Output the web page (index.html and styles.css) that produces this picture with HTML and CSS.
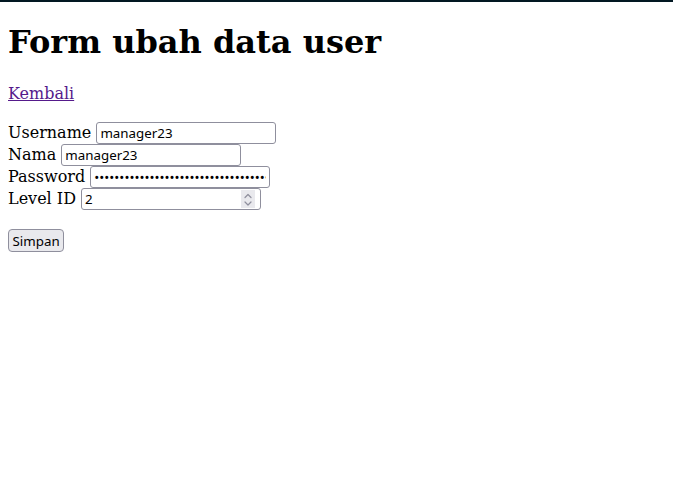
FILE: index.html
```html
<!DOCTYPE html>
<html lang="id" class="page">
<head>
<meta charset="utf-8">
<title>Form ubah data user</title>
<link rel="stylesheet" href="styles.css">
</head>
<body class="body">
<h1 class="title">Form ubah data user</h1>
<p class="back"><a href="#" class="back-link">Kembali</a></p>
<form class="form">
Username <input type="text" class="field" value="manager23"><br>
Nama <input type="text" class="field" value="manager23"><br>
Password <input type="password" class="field" value="manager23manager23manager23manager23manager23"><br>
Level ID <span class="num"><input type="number" class="num-input" value="2"><span class="spin"><svg class="spin-icon" width="14" height="18" viewBox="0 0 14 18"><path d="M4 7.5 L7 4.5 L10 7.5" fill="none" stroke="#8f8f9d" stroke-width="1.2" stroke-linecap="round" stroke-linejoin="round"/><path d="M4 12 L7 15 L10 12" fill="none" stroke="#8f8f9d" stroke-width="1.2" stroke-linecap="round" stroke-linejoin="round"/></svg></span></span><br><br>
<button type="button" class="btn">Simpan</button>
</form>
</body>
</html>
```
FILE: styles.css
```css
.page {
  border-top: 2px solid #021822;
}
.body {
  margin: 0 8px 8px;
  font-family: "DejaVu Serif", serif;
  font-size: 16px;
  color: #000;
}
.title {
  font-size: 32px;
  font-weight: bold;
  margin: 21.44px 0 22.5px;
  line-height: normal;
}
.back {
  margin: 0;
}
.back-link {
  color: #551a8b;
}
.form {
  margin-top: 19.5px;
}
.field,
.num {
  box-sizing: border-box;
  width: 180px;
  height: 22px;
  border: 1px solid #8f8f9d;
  border-radius: 3px;
  background: #fff;
  vertical-align: baseline;
}
.field {
  padding: 0 3px;
  font-family: "Noto Sans", "Open Sans", sans-serif;
  font-size: 13.33px;
  color: #000;
  margin: 0;
}
.num {
  display: inline-flex;
  align-items: center;
  padding: 0 5px 0 3px;
}
.num-input {
  flex: 1;
  min-width: 0;
  border: none;
  outline: none;
  padding: 0;
  margin: 0;
  height: 18px;
  font-family: "Noto Sans", "Open Sans", sans-serif;
  font-size: 13.33px;
  color: #000;
  background: transparent;
  -moz-appearance: textfield;
}
.num-input::-webkit-inner-spin-button,
.num-input::-webkit-outer-spin-button {
  -webkit-appearance: none;
  margin: 0;
}
.spin {
  display: flex;
  width: 14px;
  height: 18px;
  background: #e9e9ed;
}
.spin-icon {
  display: block;
}
.btn {
  box-sizing: border-box;
  height: 23px;
  padding: 0 3.5px;
  margin: 0;
  border: 1px solid #8f8f9d;
  border-radius: 4px;
  background: #e9e9ed;
  font-family: "Noto Sans", "Open Sans", sans-serif;
  font-size: 13.33px;
  color: #000;
}
```
